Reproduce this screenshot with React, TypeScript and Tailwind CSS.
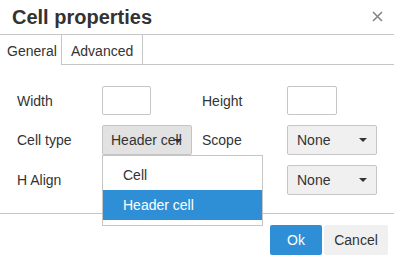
import React from "react";

function Caret() {
  return (
    <svg width="8" height="4" viewBox="0 0 8 4" className="block">
      <path d="M0 0 L8 0 L4 4 Z" fill="#333" />
    </svg>
  );
}

export default function App() {
  return (
    <div className="w-[394px] h-[263px] bg-white relative overflow-hidden font-['Liberation_Sans',Arial,sans-serif] text-[#333] text-[14px]">
      {/* header */}
      <div className="h-[35px] flex items-center justify-between pl-[12px] pr-[11px] border-b border-[#c5c5c5]">
        <div className="text-[20px] font-bold leading-none">Cell properties</div>
        <svg width="11" height="11" viewBox="0 0 11 11" className="-mt-[2px]">
          <path d="M1 1 L10 10 M10 1 L1 10" stroke="#858585" strokeWidth="1.6" />
        </svg>
      </div>
      {/* tabs */}
      <div className="h-[30px] flex">
        <div className="w-[62px] h-full border-r border-[#c5c5c5] flex items-center pl-[7px] pt-[3px]">General</div>
        <div className="w-[81px] h-full border-r border-b border-[#c5c5c5] flex items-center pl-[9px] pt-[3px]">Advanced</div>
        <div className="flex-1 h-full border-b border-[#c5c5c5]" />
      </div>
      {/* body */}
      <div className="pt-[21px] pb-[18px] pl-[17px] grid grid-cols-[85px_100px_85px_90px] gap-y-[10px] items-center">
        <div className="pt-[1px]">Width</div>
        <div className="w-[49px] h-[29px] border border-[#c5c5c5] rounded-[2px] bg-white" />
        <div className="pt-[1px]">Height</div>
        <div className="w-[50px] h-[29px] border border-[#c5c5c5] rounded-[2px] bg-white" />

        <div className="pt-[1px]">Cell type</div>
        <div className="relative w-[90px] h-[30px]">
          <div className="w-full h-full bg-[#e2e2e2] border border-[#c5c5c5] rounded-[2px] flex items-center pl-[8px] relative overflow-hidden whitespace-nowrap">
            Header cell
            <div className="absolute right-[9px] top-[13px]">
              <Caret />
            </div>
          </div>
          <div className="absolute left-0 top-[30px] w-[161px] bg-white border border-[#c5c5c5] pt-[4px] pb-[5px] z-10">
            <div className="h-[30px] flex items-center pl-[20px]">Cell</div>
            <div className="h-[30px] flex items-center pl-[20px] bg-[#2f8fd6] text-white">Header cell</div>
          </div>
        </div>
        <div className="pt-[1px]">Scope</div>
        <div className="w-[90px] h-[30px] bg-[#f0f0f0] border border-[#c5c5c5] rounded-[2px] flex items-center justify-between pl-[9px] pr-[9px]">
          None
          <Caret />
        </div>

        <div className="pt-[1px]">H Align</div>
        <div />
        <div />
        <div className="w-[90px] h-[30px] bg-[#f0f0f0] border border-[#c5c5c5] rounded-[2px] flex items-center justify-between pl-[9px] pr-[9px]">
          None
          <Caret />
        </div>
      </div>
      {/* footer */}
      <div className="border-t border-[#c5c5c5] pt-[11px] pr-[6px] flex justify-end gap-[2px]">
        <div className="w-[52px] h-[30px] bg-[#2f8fd6] text-white flex items-center justify-center rounded-[2px]">Ok</div>
        <div className="w-[64px] h-[30px] bg-[#f0f0f0] flex items-center justify-center rounded-[2px]">Cancel</div>
      </div>
    </div>
  );
}
